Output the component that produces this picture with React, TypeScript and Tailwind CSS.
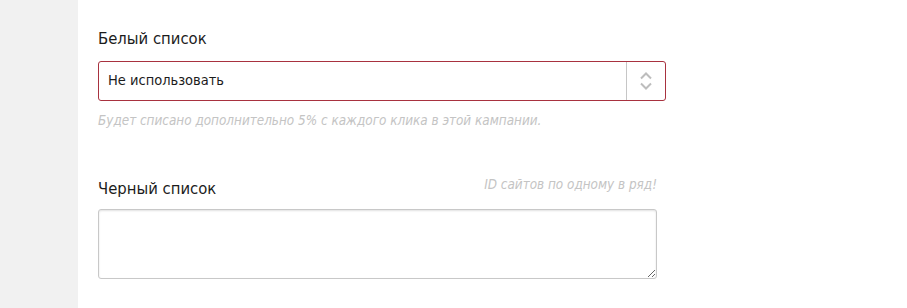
import React from "react";

const font = { fontFamily: '"DejaVu Sans Condensed", "Liberation Sans Narrow", "Liberation Sans", sans-serif' };

export default function App() {
  return (
    <div className="flex w-[907px] h-[308px] bg-white overflow-hidden" style={font}>
      <div className="w-[78px] shrink-0 bg-[#f1f1f1]" />
      <div className="flex flex-col pl-[20px] pt-[27px]">
        <div className="text-[16.5px] leading-[24px] text-[#1c1c1c]">Белый список</div>
        <div className="mt-[10px] flex w-[568px] h-[40px] rounded-[3px] border border-[#a8323f] bg-white">
          <div className="flex-1 flex items-center pl-[9px] text-[14.5px] text-[#1c1c1c]">Не использовать</div>
          <div className="w-[39px] border-l border-[#c6c6c6] flex items-center justify-center">
            <svg width="12" height="18" viewBox="0 0 12 18" fill="none" stroke="#bdbdbd" strokeWidth="2">
              <path d="M1 6.5 L6 1.5 L11 6.5" />
              <path d="M1 11.5 L6 16.5 L11 11.5" />
            </svg>
          </div>
        </div>
        <div className="mt-[10px] text-[13.4px] italic text-[#c4c4c4] leading-[20px]">
          Будет списано дополнительно 5% с каждого клика в этой кампании.
        </div>
        <div className="mt-[44px] flex w-[559px] items-end justify-between">
          <div className="text-[16.5px] leading-[24px] text-[#1c1c1c]">Черный список</div>
          <div className="text-[13.4px] italic text-[#c4c4c4] leading-[20px] mb-[6px]">ID сайтов по одному в ряд!</div>
        </div>
        <textarea
          className="mt-[8px] w-[559px] h-[70px] rounded-[3px] border border-[#c8c8c8] shadow-[inset_0_1px_2px_rgba(0,0,0,0.12)] bg-white outline-none"
        />
      </div>
    </div>
  );
}
